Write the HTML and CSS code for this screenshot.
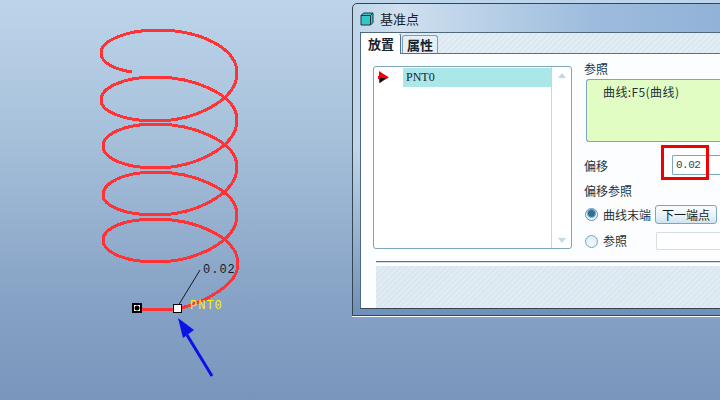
FILE: index.html
```html
<!DOCTYPE html>
<html lang="zh">
<head>
<meta charset="utf-8">
<title>基准点</title>
<link rel="stylesheet" href="styles.css">
</head>
<body>
<div class="desktop">
  <svg class="model" width="352" height="400" viewBox="0 0 352 400">
    <path class="helix" d="M132 72C118 70 101 64 101 53C101 40 128 30 157 30C200 30 237 48 237 73C237 100 195 121 155 121C125 121 101 112 101 100C101 87 125 77 155 77C195 77 237 95 237 120C237 147 195 168 155 168C125 168 103 158 103 146C103 134 125 124 155 124C195 124 237 142 237 167C237 194 195 215 155 215C125 215 103 206 103 195C103 182 125 172 155 172C195 172 237 190 237 215C237 242 195 262 155 262C125 262 103 252 103 240C103 228 125 219 155 219C195 219 238 237 238 264C238 285 205 302 178 309L137 309"/>
    <line class="leader" x1="178" y1="306" x2="200" y2="270"/>
    <rect class="marker" x="133" y="304" width="8" height="8"/>
    <circle class="dot" cx="137" cy="308" r="2.500"/>
    <rect class="marker" x="173.500" y="304.500" width="8" height="8"/>
    <line class="arrow-shaft" x1="212" y1="376" x2="187" y2="335"/>
    <polygon class="arrow-head" points="178,318 183,338 194,330"/>
  </svg>
  <span class="dim">0.02</span>
  <span class="point-name">PNT0</span>

  <section class="window">
    <header class="titlebar">
      <svg class="cube" width="14" height="14" viewBox="0 0 14 14">
        <path d="M1 3.500 3.500 1H13V10.500L10.500 13H1Z" fill="#35c6c8" stroke="#26343c"/>
        <path d="M1 3.500H10.500V13M10.500 3.500 13 1" fill="none" stroke="#26343c"/>
      </svg>
      <span class="title">基准点</span>
    </header>
    <div class="client">
      <nav class="tabs">
        <span class="tab active">放置</span>
        <span class="tab">属性</span>
      </nav>
      <div class="panel">
        <div class="list">
          <div class="list-mark">
            <svg class="mark-icon" width="12" height="14" viewBox="0 0 12 14">
              <path d="M1 1 11 7.500 1 13V9H0V6H1Z" fill="#ee0011"/>
              <path d="M2 8H8L2 13Z" fill="#111"/>
            </svg>
          </div>
          <div class="list-body"><div class="row">PNT0</div></div>
          <div class="scrollbar">
            <span class="tri up"></span>
            <span class="tri down"></span>
          </div>
        </div>
        <div class="form">
          <div class="label">参照</div>
          <div class="refs">曲线:F5(曲线)</div>
          <div class="offset">
            <span class="label">偏移</span>
            <div class="field value">0.02</div>
          </div>
          <div class="label offset-ref">偏移参照</div>
          <div class="option first">
            <span class="radio on"></span>
            <span class="label">曲线末端</span>
            <button class="btn" type="button">下一端点</button>
          </div>
          <div class="option second">
            <span class="radio"></span>
            <span class="label">参照</span>
            <div class="field blank"></div>
          </div>
        </div>
      </div>
      <footer class="footer"></footer>
    </div>
    <div class="highlight"></div>
  </section>
</div>
</body>
</html>
```
FILE: styles.css
```css
* { box-sizing: border-box; }
html, body { margin: 0; padding: 0; }
body { width: 720px; height: 400px; overflow: hidden; }

.desktop {
  position: relative;
  width: 720px;
  height: 400px;
  overflow: hidden;
  background: linear-gradient(180deg, #bdd5ea 0%, #a6c0da 35%, #86a2c5 75%, #7995bb 100%);
  font-family: "Noto Sans CJK SC", "Liberation Sans", sans-serif;
}

.model { position: absolute; left: 0; top: 0; }
.helix { fill: none; stroke: #ff3336; stroke-width: 3; shape-rendering: crispEdges; }
.leader { stroke: #10182c; stroke-width: 1; }
.marker { fill: #fff; stroke: #000; stroke-width: 1.500; shape-rendering: crispEdges; }
.dot { fill: #000; }
.arrow-shaft { stroke: #0a12e6; stroke-width: 3; }
.arrow-head { fill: #0a12e6; }

.dim, .point-name {
  position: absolute;
  font-family: "Liberation Mono", monospace;
  font-size: 12px;
  line-height: 14px;
  letter-spacing: 1px;
}
.dim { left: 203px; top: 263px; color: #141c2a; }
.point-name { left: 190px; top: 299px; color: #f6f600; }

.window {
  position: absolute;
  left: 352px;
  top: 3px;
  width: 400px;
  height: 313px;
  display: flex;
  flex-direction: column;
  padding: 0 7px 6px;
  border: 1px solid #36454f;
  border-radius: 5px 0 0 0;
  background:
    linear-gradient(180deg, rgba(110, 145, 184, 0) 0%, rgba(110, 145, 184, 0) 45%, #6e91b8 100%),
    linear-gradient(90deg, #bfd6ea 0%, #cfe0ef 12%, #9dbcdd 60%, #8fb0d6 100%);
  box-shadow: 0 1px 0 #fff;
}
.titlebar {
  display: flex;
  align-items: center;
  gap: 6px;
  height: 28px;
  flex: none;
}
.cube { flex: none; margin-top: 2px; }
.title { font-size: 13px; line-height: 14px; color: #14202a; margin-top: 1px; }

.client {
  flex: 1;
  display: flex;
  flex-direction: column;
  border: 1px solid #50687c;
  border-right: 0;
  border-bottom: 1px solid #36454f;
  background: #fbfdff;
}

.tabs {
  display: flex;
  align-items: flex-end;
  height: 21px;
  flex: none;
  gap: 1px;
  border-bottom: 1px solid #4f758d;
  background: repeating-linear-gradient(135deg, #dce8f1 0 2px, #e3edf4 2px 4px);
}
.tab {
  display: block;
  width: 36px;
  height: 18px;
  font-size: 13px;
  font-weight: 700;
  line-height: 17px;
  text-align: center;
  color: #14222c;
  background: #e6eff6;
  border: 1px solid #7da0b7;
  border-bottom: 0;
  border-radius: 3px 3px 0 0;
}
.tab.active {
  width: 40px;
  height: 21px;
  margin-bottom: -1px;
  line-height: 19px;
  background: #fff;
  border-color: #fff #4f758d #fff #fff;
}

.panel {
  flex: 1;
  display: flex;
  align-items: flex-start;
  padding: 12px 0 0 12px;
  min-height: 0;
}

.list {
  flex: none;
  display: flex;
  width: 199px;
  height: 183px;
  background: #fff;
  border: 1px solid #7da6bd;
  border-radius: 3px;
}
.list-mark { width: 29px; flex: none; padding: 3px 0 0 4px; }
.mark-icon { display: block; }
.list-body { width: 149px; flex: none; padding-top: 1px; border-right: 1px solid #c4d8e4; }
.row {
  height: 19px;
  padding-left: 3px;
  font-family: "Liberation Serif", serif;
  font-size: 12px;
  line-height: 18px;
  color: #15242c;
  background: #abe6e9;
}
.scrollbar {
  flex: 1;
  display: flex;
  flex-direction: column;
  justify-content: space-between;
  align-items: center;
  padding: 6px 0 5px;
}
.tri { width: 0; height: 0; border-left: 4px solid transparent; border-right: 4px solid transparent; }
.tri.up { border-bottom: 5px solid #c4d8e4; }
.tri.down { border-top: 5px solid #c4d8e4; }

.form {
  flex: none;
  width: 200px;
  margin-left: 12px;
  margin-top: -4px;
}
.label { font-size: 12px; line-height: 14px; color: #22323c; }
.refs {
  height: 63px;
  margin: 3px 0 0 2px;
  padding: 4px 0 0 16px;
  font-size: 12px;
  line-height: 15px;
  letter-spacing: 0.400px;
  color: #22323c;
  background: #e2fdc4;
  border: 1px solid #7da6bd;
  border-right: 0;
  border-radius: 3px 0 0 3px;
}
.offset {
  display: flex;
  align-items: center;
  margin-top: 13px;
  height: 20px;
}
.offset .label { width: 88px; flex: none; margin-top: 1px; }
.field {
  flex: 1;
  background: #fff;
  border-radius: 2px 0 0 2px;
  border-right: 0;
}
.value {
  height: 20px;
  padding-left: 3px;
  font-family: "Liberation Mono", monospace;
  font-size: 11px;
  line-height: 18px;
  letter-spacing: -0.500px;
  color: #33434f;
  border: 1px solid #7da6bd;
  border-right: 0;
}
.blank { height: 18px; border: 1px solid #d4dde2; border-right: 0; }
.offset-ref { margin-top: 9px; }
.option { display: flex; align-items: center; }
.option.first { margin-top: 7px; height: 19px; }
.option.second { margin-top: 8px; height: 18px; }
.radio {
  width: 13px;
  height: 13px;
  flex: none;
  margin: 0 5px 0 1px;
  border: 1px solid #7da6bd;
  border-radius: 50%;
  background: radial-gradient(circle at 50% 70%, #f6fbff, #d5e5f0);
}
.radio.on {
  background: radial-gradient(circle at 50% 40%, #2f6f96 0 3px, #75a8c6 4px, #e8f2f8 5px);
  border-color: #5d93b3;
}
.btn {
  width: 62px;
  height: 19px;
  margin-left: 4px;
  padding: 0;
  font-family: inherit;
  font-size: 12px;
  line-height: 17px;
  color: #101c24;
  background: linear-gradient(180deg, #fafdff 0%, #e6f1f9 60%, #cfe3f2 100%);
  border: 1px solid #7da6bd;
  border-radius: 3px;
}
.second .blank { flex: none; width: 70px; margin-left: 29px; }

.footer {
  flex: none;
  height: 47px;
  margin-left: 15px;
  border-top: 1px solid #4f758d;
  box-shadow: inset 0 1px 0 #d0dde6, inset 0 4px 0 #fff;
  background: repeating-linear-gradient(135deg, #dbe7f0 0 2px, #e0ebf2 2px 4px);
}

.highlight {
  position: absolute;
  left: 308px;
  top: 141px;
  width: 48px;
  height: 35px;
  border: 3px solid #f00000;
}
```
